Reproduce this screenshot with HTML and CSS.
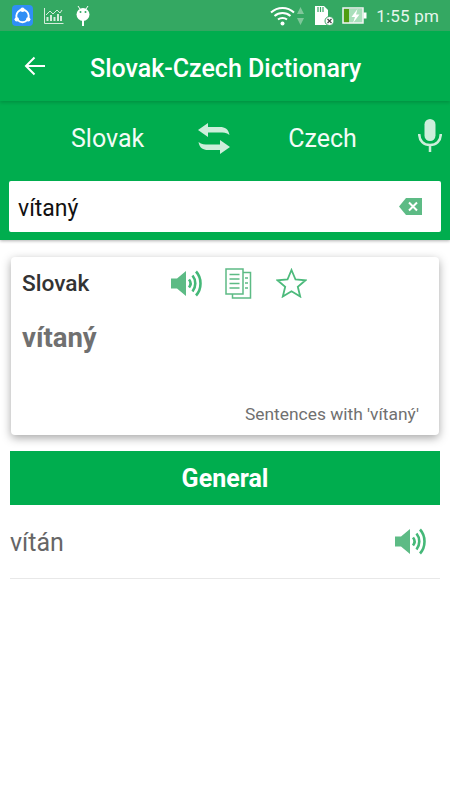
FILE: index.html
```html
<!DOCTYPE html>
<html lang="sk">
<head>
  <meta charset="UTF-8">
  <meta name="viewport" content="width=device-width, initial-scale=1.0">
  <title>Slovak-Czech Dictionary</title>
  <link rel="stylesheet" href="styles.css">
</head>
<body>
  <div class="status-bar">
    <div class="status-left">
      <span class="share-badge">
        <svg width="22" height="22" viewBox="0 0 22 22" fill="none" stroke="#fff"><circle cx="11" cy="11" r="6.5" stroke-width="2"/><circle cx="11" cy="4.5" r="2.3" fill="#fff" stroke="none"/><circle cx="5" cy="14.5" r="2.3" fill="#fff" stroke="none"/><circle cx="17" cy="14.5" r="2.3" fill="#fff" stroke="none"/></svg>
      </span>
      <svg width="20" height="18" viewBox="0 0 20 18" fill="none" stroke="#d5ecdc" stroke-width="1"><path d="M.5 1v15.500h19"/><path d="M2 8l4-4 3 3 4-4 3 3 2-3"/><path d="M3.500 14V10M7 14V8M10.500 14V10M14 14V7M17 14V9" stroke-width="2"/></svg>
      <svg width="16" height="22" viewBox="0 0 16 22"><path d="M3 1l2 3M13 1l-2 3" stroke="#fff" stroke-width="1"/><ellipse cx="8" cy="9.500" rx="6.500" ry="6.500" fill="#fff"/><path d="M8 15v6" stroke="#fff" stroke-width="2"/><circle cx="5.500" cy="7" r="1" fill="#34a862"/><circle cx="10.500" cy="7" r="1" fill="#34a862"/></svg>
    </div>
    <div class="status-right">
      <svg width="25" height="21" viewBox="0 0 25 21" fill="none" stroke="#fff" stroke-width="2"><path d="M1 7.500c6.500-6 16.500-6 23 0"/><path d="M4.500 11c4.500-4 11.500-4 16 0"/><path d="M8 14.500c2.500-2 6.500-2 9 0"/><circle cx="12.500" cy="18.500" r="2" fill="#fff" stroke="none"/></svg>
      <svg class="wifi-arrows" width="7" height="20" viewBox="0 0 7 20" fill="#7fc79a"><path d="M3.500 1L7 8H0zM3.500 19L0 12h7z"/></svg>
      <svg class="sd-icon" width="21" height="21" viewBox="0 0 21 21"><path d="M1 1h9l4 4v15H1z" fill="#fff"/><path d="M4 2v5M6.500 2v5M9 2v5" stroke="#34a862" stroke-width="1.200"/><circle cx="15.500" cy="16" r="4.500" fill="#fff" stroke="#34a862"/><path d="M13.500 14l4 4M17.500 14l-4 4" stroke="#444" stroke-width="1.200"/></svg>
      <svg class="battery-icon" width="25" height="18" viewBox="0 0 25 18"><rect x="2" y="2" width="19" height="14" fill="#a9dfbb"/><rect x="2" y="2" width="5" height="14" fill="#4f9d12"/><rect x="1" y="1" width="20" height="15" fill="none" stroke="#f4f4f4" stroke-width="1.500"/><rect x="21.500" y="5.500" width="3" height="6" fill="#fff"/><path d="M15.500 2l-6 8h3.500l-2 6 6.500-8.500h-3.500z" fill="#fff"/></svg>
      <span class="clock">1:55 pm</span>
    </div>
  </div>

  <header class="toolbar">
    <svg class="back-icon" width="22" height="20" viewBox="0 0 22 20" fill="none" stroke="#fff" stroke-width="2"><path d="M21 10H2M10.500 1.500L2 10l8.500 8.500"/></svg>
    <h1>Slovak-Czech Dictionary</h1>
  </header>

  <section class="search-panel">
    <div class="lang-row">
      <span class="lang lang-from">Slovak</span>
      <svg class="swap-icon" width="32" height="31" viewBox="0 0 32 31" fill="#cdeedb"><path d="M0 7l10-7v4h12c5 0 8.500 2 9.500 8-3-2.500-6.500-2.500-9.500-2.500H10V14z"/><path d="M0 7l10-7v4h12c5 0 8.500 2 9.500 8-3-2.500-6.500-2.500-9.500-2.500H10V14z" transform="rotate(180 16 15.500)"/></svg>
      <span class="lang lang-to">Czech</span>
      <svg class="mic-icon" width="24" height="33" viewBox="0 0 24 33" fill="none"><rect x="6.500" y="0" width="11" height="22" rx="5.500" fill="#cdeedb"/><path d="M1.200 15c0 7 4.500 11 10.800 11s10.800-4 10.800-11M12 26v7" stroke="#cdeedb" stroke-width="2.500"/></svg>
    </div>
    <div class="search-box">
      <span class="search-text">vítaný</span>
      <svg width="23" height="17" viewBox="0 0 23 17"><path d="M7 0h16v17H7L0 8.500z" fill="#5dbb85"/><path d="M10 4.500l8 8M18 4.500l-8 8" stroke="#fff" stroke-width="2"/></svg>
    </div>
  </section>

  <main class="content">
    <div class="word-card">
      <div class="card-head">
        <span class="card-lang">Slovak</span>
        <svg class="speaker" width="31" height="27" viewBox="0 0 31 27" fill="none"><path d="M0 8.500h6L15 1v25l-9-7.500H0z" fill="#5dbb85"/><path d="M18 9.500c2 2.500 2 5.500 0 8M21.500 5.500c3.700 4.500 3.700 11.500 0 16M25 1.500c6 6.500 6 17.500 0 24" stroke="#45b878" stroke-width="2.600"/></svg>
        <svg class="copy-icon" width="27" height="31" viewBox="0 0 27 31" fill="none" stroke="#5dbb85" stroke-width="1.500"><path d="M1 1h17v25H1zM18 4.500h7.500V30H7.500v-4M4.500 6.500h10M4.500 11h10M4.500 15.500h10M4.500 20h10M20 10h3M20 15h3M20 20h3"/></svg>
        <svg class="star-icon" width="31" height="30" viewBox="0 0 31 30" fill="none" stroke="#4dba7c" stroke-width="1.800"><path d="M15.500 2l4 9.500 10 .8-7.700 6.500 2.400 9.700-8.700-5.200-8.700 5.200 2.400-9.700-7.700-6.500 10-.8z"/></svg>
      </div>
      <div class="card-word">vítaný</div>
      <div class="card-link">Sentences with 'vítaný'</div>
    </div>

    <div class="section-title">General</div>

    <div class="result-row">
      <span class="result-word">vítán</span>
      <svg width="31" height="27" viewBox="0 0 31 27" fill="none"><path d="M0 8.500h6L15 1v25l-9-7.500H0z" fill="#5dbb85"/><path d="M18 9.500c2 2.500 2 5.500 0 8M21.500 5.500c3.700 4.500 3.700 11.500 0 16M25 1.500c6 6.500 6 17.500 0 24" stroke="#45b878" stroke-width="2.600"/></svg>
    </div>
  </main>
</body>
</html>
```

FILE: styles.css
```css
:root {
  --green: #00ad4e;
}

* {
  box-sizing: border-box;
}

html, body {
  height: 100%;
}

body {
  margin: 0;
  background: white;
  font-family: 'Roboto', sans-serif;
  overflow: hidden;
}

.status-bar {
  height: 31px;
  background: #34a862;
  display: flex;
  justify-content: space-between;
  align-items: center;
  padding: 0 11px 0 12px;
}

.status-left, .status-right {
  display: flex;
  align-items: center;
}

.status-left {
  gap: 11px;
}

.share-badge {
  width: 21px;
  height: 21px;
  border-radius: 4px;
  background: #2f8ff5;
  display: flex;
  align-items: center;
  justify-content: center;
}

.wifi-arrows {
  margin-left: 2px;
}

.sd-icon {
  margin-left: 10px;
}

.battery-icon {
  margin-left: 7px;
}

.clock {
  margin-left: 9px;
  color: #e6f5ec;
  font-size: 17px;
  letter-spacing: 0.2px;
}

.toolbar {
  height: 70px;
  background: var(--green);
  display: flex;
  align-items: center;
  padding: 0 24px;
  position: relative;
  box-shadow: 0 2px 3px rgba(0,0,0,0.14);
}

.back-icon {
  flex: none;
}

.toolbar h1 {
  margin: 0 0 0 44px;
  padding-top: 4px;
  color: white;
  font-size: 25px;
  font-weight: 500;
  white-space: nowrap;
}

.search-panel {
  height: 139px;
  background: var(--green);
  padding: 0 9px;
  box-shadow: 0 1px 3px rgba(0,0,0,0.3);
}

.lang-row {
  height: 80px;
  padding-bottom: 6px;
  display: flex;
  align-items: center;
}

.lang {
  color: #f2fbf6;
  font-size: 25px;
}

.lang-from {
  margin-left: 62px;
}

.swap-icon {
  margin-left: 54px;
}

.lang-to {
  margin-left: 58px;
}

.mic-icon {
  margin-left: 61px;
  margin-right: -10px;
  margin-bottom: 5px;
}

.search-box {
  height: 51px;
  background: white;
  border-radius: 2px;
  display: flex;
  align-items: center;
  justify-content: space-between;
  padding: 0 19px 0 9px;
}

.search-text {
  padding-top: 3px;
  font-size: 23px;
  color: #111;
}

.content {
  padding: 17px 10px 0;
}

.word-card {
  height: 178px;
  margin: 0 1px;
  background: white;
  border-radius: 4px;
  box-shadow: 0 3px 10px rgba(0,0,0,0.35);
  padding: 0 11px;
  position: relative;
}

.card-head {
  height: 52px;
  display: flex;
  align-items: center;
}

.card-lang {
  width: 149px;
  font-size: 22.7px;
  font-weight: 500;
  color: #333;
}

.copy-icon {
  margin-left: 23px;
}

.star-icon {
  margin-left: 24px;
}

.card-word {
  margin-top: 12px;
  font-size: 27.5px;
  font-weight: 700;
  color: #707070;
}

.card-link {
  position: absolute;
  right: 20px;
  bottom: 11px;
  font-size: 17.4px;
  color: #707070;
}

.section-title {
  margin-top: 16px;
  height: 54px;
  background: var(--green);
  color: white;
  font-size: 25px;
  font-weight: 700;
  display: flex;
  align-items: center;
  justify-content: center;
}

.result-row {
  height: 74px;
  display: flex;
  align-items: center;
  justify-content: space-between;
  padding-right: 14px;
  border-bottom: 1px solid #e8e8e8;
}

.result-word {
  padding-top: 2px;
  font-size: 25px;
  color: #666;
}
```
